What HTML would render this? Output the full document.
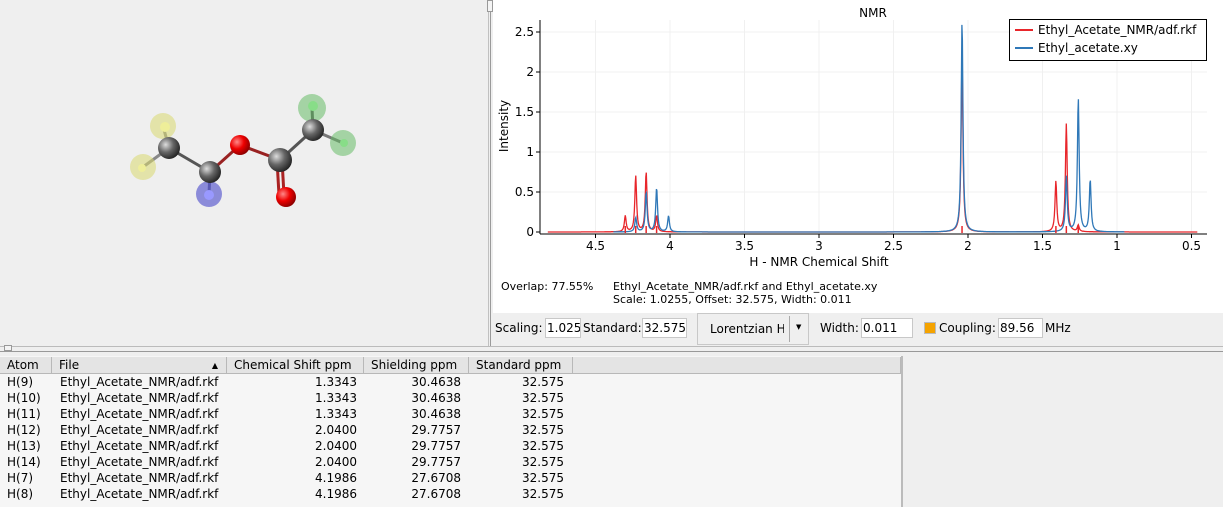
<!DOCTYPE html>
<html><head><style>
body{margin:0;width:1223px;height:507px;background:#efefef;position:relative;overflow:hidden;font-family:"DejaVu Sans","Liberation Sans",sans-serif;font-size:12px;color:#000}
.a{position:absolute}
.tb td{padding:0 4px;height:16px;white-space:nowrap;box-sizing:border-box}
.hd{position:absolute;top:357px;height:17px;background:#e4e4e4;border-right:1px solid #b8b8b8;border-bottom:1px solid #b8b8b8;line-height:17px;padding-left:7px;box-sizing:border-box}
.inp{position:absolute;top:318px;height:20px;background:#fff;border:1px solid #c8c8c8;box-sizing:border-box;line-height:18px;padding-left:1px;overflow:hidden;white-space:nowrap}
.lb{position:absolute;top:318px;line-height:20px}
.c3{text-align:right;padding-right:7px!important}
.c4{text-align:right;padding-right:8px!important}
.c5{text-align:right;padding-right:9px!important}
</style></head><body>
<div class="a" style="left:0;top:0;width:488px;height:345px;background:#efefef"></div>
<div class="a" style="left:488px;top:0;width:1px;height:346px;background:#c0c0c0"></div>
<div class="a" style="left:490px;top:0;width:1px;height:346px;background:#9a9a9a"></div>
<div class="a" style="left:487px;top:0;width:6px;height:12px;border:1px solid #999;background:#f4f4f4;box-sizing:border-box"></div>
<svg class="a" style="left:0;top:0" width="488" height="345">
<defs>
<radialGradient id="gc" cx="35%" cy="35%" r="70%"><stop offset="0" stop-color="#ddd"/><stop offset=".5" stop-color="#666"/><stop offset="1" stop-color="#222"/></radialGradient>
<radialGradient id="gr" cx="35%" cy="35%" r="70%"><stop offset="0" stop-color="#f88"/><stop offset=".5" stop-color="#e00"/><stop offset="1" stop-color="#800"/></radialGradient>
</defs>
<g stroke-width="3">
<line x1="169" y1="148" x2="210" y2="172" stroke="#555"/>
<line x1="169" y1="148" x2="143" y2="167" stroke="#888"/>
<line x1="169" y1="148" x2="163" y2="126" stroke="#888"/>
<line x1="210" y1="172" x2="240" y2="145" stroke="#992222"/>
<line x1="210" y1="172" x2="209" y2="194" stroke="#668"/>
<line x1="240" y1="145" x2="280" y2="160" stroke="#992222"/>
<line x1="280" y1="160" x2="313" y2="130" stroke="#555"/>
<line x1="282" y1="160" x2="284" y2="195" stroke="#aa2222"/>
<line x1="277" y1="160" x2="279" y2="195" stroke="#aa2222"/>
<line x1="313" y1="130" x2="343" y2="143" stroke="#777"/>
<line x1="313" y1="130" x2="312" y2="108" stroke="#555"/>
</g>
<circle cx="163" cy="126" r="13" fill="#d8d870" opacity=".55"/>
<circle cx="143" cy="167" r="13" fill="#d8d870" opacity=".55"/>
<circle cx="209" cy="194" r="13" fill="#5555cc" opacity=".65"/>
<circle cx="312" cy="108" r="14" fill="#66bb66" opacity=".55"/>
<circle cx="343" cy="143" r="13" fill="#66bb66" opacity=".55"/>
<circle cx="165" cy="127" r="5" fill="#ee9"/><circle cx="142" cy="168" r="4" fill="#ee9"/>
<circle cx="209" cy="195" r="5" fill="#99f"/><circle cx="313" cy="106" r="5" fill="#8d8"/><circle cx="344" cy="143" r="4" fill="#8d8"/>
<circle cx="169" cy="148" r="11" fill="url(#gc)"/>
<circle cx="210" cy="172" r="11" fill="url(#gc)"/>
<circle cx="280" cy="160" r="12" fill="url(#gc)"/>
<circle cx="313" cy="130" r="11" fill="url(#gc)"/>
<circle cx="240" cy="145" r="10" fill="url(#gr)"/>
<circle cx="286" cy="197" r="10" fill="url(#gr)"/>
</svg>
<div class="a" style="left:493px;top:0;width:730px;height:313px;background:#fff"></div>
<svg id="plot" class="a" style="left:493px;top:0" width="730" height="313" font-family="DejaVu Sans,Liberation Sans,sans-serif" font-size="12"></svg>
<div class="a" style="left:501px;top:280px;font-size:11px">Overlap: 77.55%</div>
<div class="a" style="left:613px;top:280px;font-size:11px;line-height:13px">Ethyl_Acetate_NMR/adf.rkf and Ethyl_acetate.xy<br>Scale: 1.0255, Offset: 32.575, Width: 0.011</div>
<div class="lb" style="left:495px">Scaling:</div>
<div class="inp" style="left:545px;width:36px">1.0255</div>
<div class="lb" style="left:583px">Standard:</div>
<div class="inp" style="left:642px;width:45px">32.575</div>
<div class="a" style="left:697px;top:313px;width:112px;height:32px;border:1px solid #c8c8c8;box-sizing:border-box;background:#efefef"></div>
<div class="lb" style="left:710px;top:319px;width:74px;overflow:hidden;white-space:nowrap">Lorentzian H</div>
<div class="a" style="left:789px;top:316px;width:1px;height:26px;background:#aaa"></div>
<div class="a" style="left:796px;top:323px;font-size:7px">▼</div>
<div class="lb" style="left:820px">Width:</div>
<div class="inp" style="left:861px;width:52px">0.011</div>
<div class="a" style="left:924px;top:322px;width:10px;height:10px;background:#f5a300;border:1px solid #bbb"></div>
<div class="lb" style="left:939px">Coupling:</div>
<div class="inp" style="left:998px;width:45px">89.56</div>
<div class="lb" style="left:1045px">MHz</div>
<div class="a" style="left:0;top:346px;width:1223px;height:1px;background:#bbb"></div>
<div class="a" style="left:0;top:351px;width:1223px;height:1px;background:#999"></div>
<div class="a" style="left:4px;top:345px;width:8px;height:6px;border:1px solid #999;background:#f4f4f4;box-sizing:border-box"></div>
<div class="a" style="left:0;top:356px;width:901px;height:151px;background:#f6f6f6"></div>
<div class="a" style="left:901px;top:356px;width:2px;height:151px;background:#bbb"></div>
<div class="hd" style="left:0;width:52px">Atom</div>
<div class="hd" style="left:52px;width:175px">File<span style="position:absolute;right:8px;font-size:8px">▲</span></div>
<div class="hd" style="left:227px;width:137px">Chemical Shift ppm</div>
<div class="hd" style="left:364px;width:105px">Shielding ppm</div>
<div class="hd" style="left:469px;width:104px">Standard ppm</div>
<div class="hd" style="left:573px;width:328px"></div>
<table class="tb a" style="left:0;top:374px;border-collapse:collapse;table-layout:fixed;width:573px">
<colgroup><col style="width:52px"><col style="width:175px"><col style="width:137px"><col style="width:105px"><col style="width:104px"></colgroup>
<tr><td style="padding-left:7px">H(9)</td><td style="padding-left:8px">Ethyl_Acetate_NMR/adf.rkf</td><td class="c3">1.3343</td><td class="c4">30.4638</td><td class="c5">32.575</td></tr>
<tr><td style="padding-left:7px">H(10)</td><td style="padding-left:8px">Ethyl_Acetate_NMR/adf.rkf</td><td class="c3">1.3343</td><td class="c4">30.4638</td><td class="c5">32.575</td></tr>
<tr><td style="padding-left:7px">H(11)</td><td style="padding-left:8px">Ethyl_Acetate_NMR/adf.rkf</td><td class="c3">1.3343</td><td class="c4">30.4638</td><td class="c5">32.575</td></tr>
<tr><td style="padding-left:7px">H(12)</td><td style="padding-left:8px">Ethyl_Acetate_NMR/adf.rkf</td><td class="c3">2.0400</td><td class="c4">29.7757</td><td class="c5">32.575</td></tr>
<tr><td style="padding-left:7px">H(13)</td><td style="padding-left:8px">Ethyl_Acetate_NMR/adf.rkf</td><td class="c3">2.0400</td><td class="c4">29.7757</td><td class="c5">32.575</td></tr>
<tr><td style="padding-left:7px">H(14)</td><td style="padding-left:8px">Ethyl_Acetate_NMR/adf.rkf</td><td class="c3">2.0400</td><td class="c4">29.7757</td><td class="c5">32.575</td></tr>
<tr><td style="padding-left:7px">H(7)</td><td style="padding-left:8px">Ethyl_Acetate_NMR/adf.rkf</td><td class="c3">4.1986</td><td class="c4">27.6708</td><td class="c5">32.575</td></tr>
<tr><td style="padding-left:7px">H(8)</td><td style="padding-left:8px">Ethyl_Acetate_NMR/adf.rkf</td><td class="c3">4.1986</td><td class="c4">27.6708</td><td class="c5">32.575</td></tr>
</table>
<script>
(function(){
var s=document.getElementById('plot'),o=493,h='';
function X(p){return 670+(4-p)*149-o}
function Y(v){return 232-v*80}
for(var p=4.5;p>=0.5;p-=0.5){h+='<line x1="'+X(p)+'" y1="20" x2="'+X(p)+'" y2="232" stroke="#f0f0f0"/>'}
for(var v=0.5;v<=2.5;v+=0.5){h+='<line x1="47" y1="'+Y(v)+'" x2="714" y2="'+Y(v)+'" stroke="#f0f0f0"/>'}
function curve(peaks,col,x0,x1){var d='';for(var px=x0;px<=x1;px+=0.5){var p=4-(px+o-670)/149,v=0;peaks.forEach(function(k){var g=0.007;v+=k[1]*g*g/((p-k[0])*(p-k[0])+g*g)});d+=(d?'L':'M')+px.toFixed(1)+' '+Y(v).toFixed(1)}
return '<path d="'+d+'" fill="none" stroke="'+col+'" stroke-width="1.3"/>'}
var red=[[4.30,.2],[4.23,.7],[4.16,.75],[4.09,.2],[2.04,2.2],[1.41,.63],[1.34,1.35],[1.26,.08]];
var blue=[[4.23,.18],[4.16,.5],[4.09,.55],[4.01,.2],[2.04,2.65],[1.34,.69],[1.26,1.67],[1.18,.65]];
h+=curve(red,'#e8262b',X(4.82),X(0.46));
h+=curve(blue,'#2f78b8',X(4.38),X(0.95));
[4.30,4.23,4.16,4.09,2.04,1.41,1.34,1.26].forEach(function(p){h+='<line x1="'+X(p)+'" y1="226" x2="'+X(p)+'" y2="233" stroke="#e8262b" stroke-width="1.5"/>'});
h+='<line x1="47" y1="20" x2="47" y2="234" stroke="#000"/><line x1="47" y1="234" x2="714" y2="234" stroke="#000"/>';
[0,0.5,1,1.5,2,2.5].forEach(function(v){h+='<line x1="43" y1="'+Y(v)+'" x2="47" y2="'+Y(v)+'" stroke="#000"/><text x="41" y="'+(Y(v)+4)+'" text-anchor="end">'+v+'</text>'});
[4.5,4,3.5,3,2.5,2,1.5,1,0.5].forEach(function(p){h+='<line x1="'+X(p)+'" y1="234" x2="'+X(p)+'" y2="238" stroke="#000"/><text x="'+X(p)+'" y="250" text-anchor="middle">'+p+'</text>'});
h+='<text x="'+X(3)+'" y="266" text-anchor="middle">H - NMR Chemical Shift</text>';
h+='<text transform="translate(15,126) rotate(-90)" text-anchor="middle">Intensity</text>';
h+='<text x="380" y="17" text-anchor="middle">NMR</text>';
h+='<rect x="516.5" y="19.5" width="197" height="41" fill="#fff" stroke="#000"/>';
h+='<line x1="522" y1="30" x2="540" y2="30" stroke="#e8262b" stroke-width="2"/><text x="545" y="34">Ethyl_Acetate_NMR/adf.rkf</text>';
h+='<line x1="522" y1="48" x2="540" y2="48" stroke="#2f78b8" stroke-width="2"/><text x="545" y="52">Ethyl_acetate.xy</text>';
s.innerHTML=h;
})();
</script>
</body></html>
